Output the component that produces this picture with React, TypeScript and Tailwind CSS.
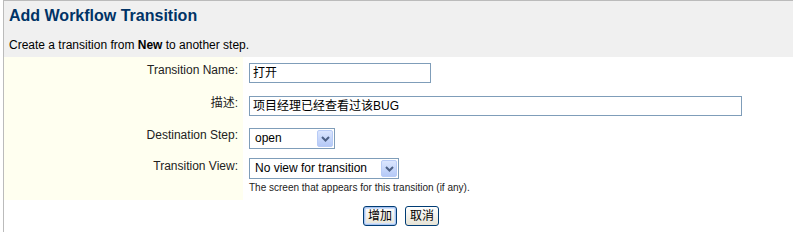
import React from 'react';

const font = { fontFamily: '"Liberation Sans", Arial, "Noto Sans CJK SC", sans-serif' };

function Chevron() {
  return (
    <svg width="9" height="6" viewBox="0 0 9 6" className="block">
      <path d="M1 1 L4.5 4.5 L8 1" fill="none" stroke="#4d6185" strokeWidth="2" />
    </svg>
  );
}

function FakeSelect({ value, width }: { value: string; width: string }) {
  return (
    <div className={`${width} h-[21px] border border-[#7f9db9] bg-white flex items-stretch`}>
      <div className="flex-1 pl-[5px] text-[12px] leading-[19px] text-black">{value}</div>
      <div className="w-[16px] m-px rounded-[2px] border border-[#b8cbf6] bg-gradient-to-b from-[#dbe6fe] to-[#b5c9f7] flex items-center justify-center">
        <Chevron />
      </div>
    </div>
  );
}

function Row({ label, children, h, lp = 'pt-[6px]' }: { label: string; children: React.ReactNode; h: string; lp?: string }) {
  return (
    <div className={`flex ${h}`}>
      <div className={`w-[239px] bg-[#fffff0] text-right pr-[5px] ${lp} text-[12px] leading-[14px] text-[#222]`}>{label}</div>
      <div className="flex-1 pl-[6px] pt-[6px]">{children}</div>
    </div>
  );
}

export default function App() {
  return (
    <div className="w-[793px] h-[232px] bg-white pl-[3px] overflow-hidden" style={font}>
      <div className="h-full border-l border-t border-[#bbbbbb]">
        <div className="h-[56px] bg-[#f0f0f0] px-[5px] pt-[5px]">
          <h2 className="text-[16px] leading-[19px] font-bold text-[#003366]">Add Workflow Transition</h2>
          <p className="mt-[13px] text-[12px] leading-[14px] text-black">
            Create a transition from <b>New</b> to another step.
          </p>
        </div>

        <Row label="Transition Name:" h="h-[33px]">
          <div className="w-[182px] h-[20px] border border-[#7f9db9] bg-white pl-[3px] text-[12px] leading-[18px] text-black">打开</div>
        </Row>
        <Row label="描述:" h="h-[32px]">
          <div className="w-[493px] h-[20px] border border-[#7f9db9] bg-white pl-[3px] text-[12px] leading-[18px] text-black">项目经理已经查看过该BUG</div>
        </Row>
        <Row label="Destination Step:" h="h-[30px]">
          <FakeSelect value="open" width="w-[86px]" />
        </Row>
        <Row label="Transition View:" h="h-[48px]" lp="pt-[7px]">
          <FakeSelect value="No view for transition" width="w-[150px]" />
          <div className="mt-[3px] text-[10px] leading-[12px] text-[#222]">The screen that appears for this transition (if any).</div>
        </Row>

        <div className="flex justify-center gap-[8px] pt-[6px] pl-[5px]">
          <button className="h-[20px] px-[4px] rounded-[3px] border border-[#003c74] bg-gradient-to-b from-white to-[#e6e3d6] shadow-[inset_0_0_0_1px_#a9c4f0,inset_0_0_0_2px_#cfe0fb] text-[12px] leading-[16px] text-black">增加</button>
          <button className="h-[20px] px-[4px] rounded-[3px] border border-[#003c74] bg-gradient-to-b from-white to-[#e6e3d6] text-[12px] leading-[16px] text-black">取消</button>
        </div>
      </div>
    </div>
  );
}
